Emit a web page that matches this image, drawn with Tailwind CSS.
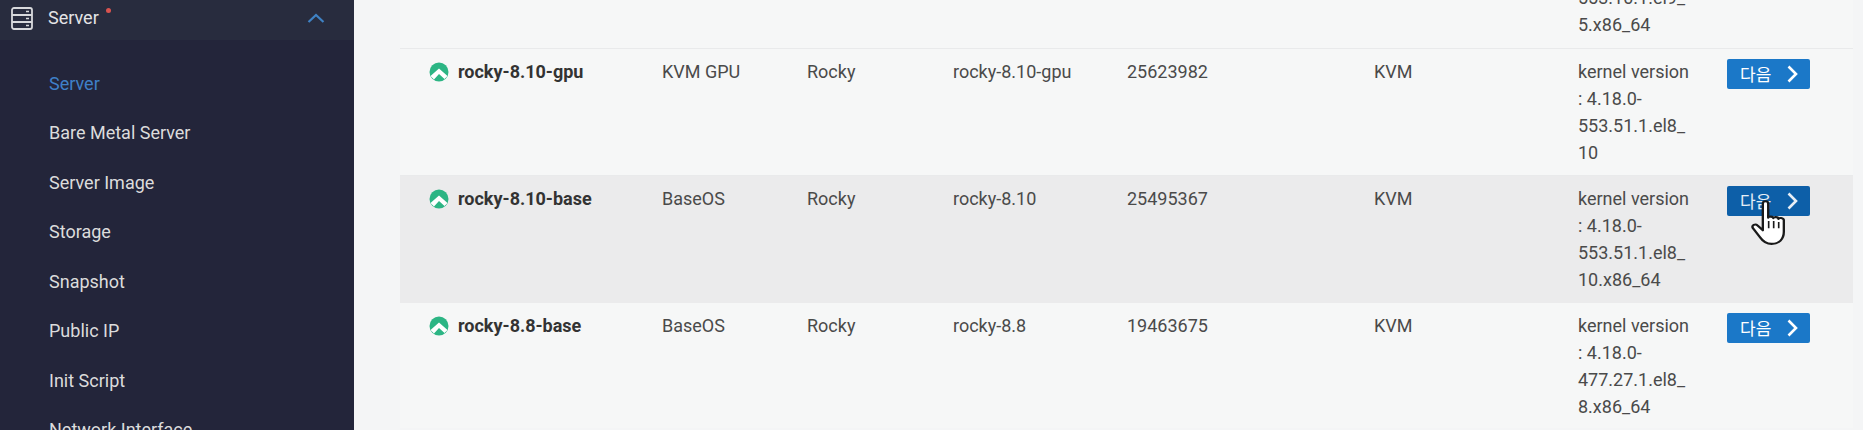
<!DOCTYPE html>
<html lang="en">
<head>
  <meta charset="UTF-8">
  <title>Server Image</title>
  <script src="https://cdn.jsdelivr.net/npm/@tailwindcss/browser@4"></script>
</head>
<body class="h-[430px] overflow-hidden bg-[#f4f5f6] font-['Roboto',sans-serif]">
<div class="flex h-[430px] overflow-hidden">

  <!-- Sidebar -->
  <aside class="w-[354px] shrink-0 h-[430px] overflow-hidden bg-[#23253a] text-[18px] text-[#dcdcdc]">
    <div class="h-[40px] bg-[#282c3e] flex items-start pt-[7px] pl-[11px] pr-[29px]">
      <svg class="w-[22px] h-[23px] shrink-0" viewBox="0 0 22 23" fill="none" stroke="#d8d9dc" stroke-width="1.8">
        <rect x="1" y="1" width="20" height="21" rx="2"/>
        <path d="M1 8h20M1 15h20"/>
        <path d="M15 4.5h3M15 11.5h3M15 18.5h3" stroke-width="1.5"/>
      </svg>
      <span class="ml-[15px] leading-[22px] text-[#e4e4e6]">Server</span>
      <span class="ml-[7px] mt-[1px] w-[5px] h-[5px] rounded-full bg-[#d9534f]"></span>
      <svg class="ml-auto mt-[6px] w-[18px] h-[10px]" viewBox="0 0 18 10" fill="none" stroke="#3f82c4" stroke-width="2.2">
        <path d="M1.5 9L9 2l7.5 7"/>
      </svg>
    </div>
    <ul class="pl-[49px] pt-[32.5px] flex flex-col gap-[27.5px] leading-[22px]">
      <li class="text-[#3f80c8]">Server</li>
      <li>Bare Metal Server</li>
      <li>Server Image</li>
      <li>Storage</li>
      <li>Snapshot</li>
      <li>Public IP</li>
      <li>Init Script</li>
      <li>Network Interface</li>
    </ul>
  </aside>

  <!-- Image table -->
  <main class="relative flex-1 min-w-0 pl-[46px] pr-[10px] text-[18px] leading-[27px] text-[#4a4a4a]">
    <div class="h-[49px] overflow-hidden bg-[#f6f7f7] border-b border-[#e9eaeb] grid grid-cols-[262px_145px_146px_174px_247px_204px_149px_1fr] items-end pb-[10px]">
      <div class="col-start-7 col-span-1">
        <div class="mt-[-27px]">553.10.1.el9_</div>
        <div>5.x86_64</div>
      </div>
    </div>

    <div class="h-[127px] bg-[#f6f7f7] border-b border-[#e9eaeb] pt-[9px] grid grid-cols-[262px_145px_146px_174px_247px_204px_149px_1fr] items-start">
      <div class="flex items-center pl-[29px] font-bold text-[#333]">
        <svg class="w-[20px] h-[20px] shrink-0 mr-[9px]" viewBox="0 0 20 20"><circle cx="10" cy="10" r="9.5" fill="#2cb584"/><path d="M1.5 14L10 6.5l8.5 7.5-3 3-5.5-5-5 5.5z" fill="#fff"/></svg>
        rocky-8.10-gpu
      </div>
      <div>KVM GPU</div>
      <div>Rocky</div>
      <div>rocky-8.10-gpu</div>
      <div>25623982</div>
      <div>KVM</div>
      <div>kernel version<br>: 4.18.0-<br>553.51.1.el8_<br>10</div>
      <div class="pt-[1px]">
        <button class="w-[83px] h-[30px] rounded-[2px] bg-[#1b78c8] text-white text-[17px] leading-[30px] flex items-center pl-[13px]">
          <span class="font-['Noto_Sans_CJK_KR',sans-serif]">다음</span>
          <svg class="ml-[16px] w-[11px] h-[18px]" viewBox="0 0 11 18" fill="none" stroke="#fff" stroke-width="2.6"><path d="M1.5 1.5L9 9l-7.5 7.5"/></svg>
        </button>
      </div>
    </div>

    <div class="h-[127px] bg-[#ebebec] pt-[9px] grid grid-cols-[262px_145px_146px_174px_247px_204px_149px_1fr] items-start">
      <div class="flex items-center pl-[29px] font-bold text-[#333]">
        <svg class="w-[20px] h-[20px] shrink-0 mr-[9px]" viewBox="0 0 20 20"><circle cx="10" cy="10" r="9.5" fill="#2cb584"/><path d="M1.5 14L10 6.5l8.5 7.5-3 3-5.5-5-5 5.5z" fill="#fff"/></svg>
        rocky-8.10-base
      </div>
      <div>BaseOS</div>
      <div>Rocky</div>
      <div>rocky-8.10</div>
      <div>25495367</div>
      <div>KVM</div>
      <div>kernel version<br>: 4.18.0-<br>553.51.1.el8_<br>10.x86_64</div>
      <div class="pt-[1px]">
        <button class="w-[83px] h-[30px] rounded-[2px] bg-[#0d5fa8] text-white/90 text-[17px] leading-[30px] flex items-center pl-[13px]">
          <span class="font-['Noto_Sans_CJK_KR',sans-serif]">다음</span>
          <svg class="ml-[16px] w-[11px] h-[18px]" viewBox="0 0 11 18" fill="none" stroke="#e8eef5" stroke-width="2.6"><path d="M1.5 1.5L9 9l-7.5 7.5"/></svg>
        </button>
      </div>
    </div>

    <div class="h-[125px] bg-[#f6f7f7] pt-[9px] grid grid-cols-[262px_145px_146px_174px_247px_204px_149px_1fr] items-start">
      <div class="flex items-center pl-[29px] font-bold text-[#333]">
        <svg class="w-[20px] h-[20px] shrink-0 mr-[9px]" viewBox="0 0 20 20"><circle cx="10" cy="10" r="9.5" fill="#2cb584"/><path d="M1.5 14L10 6.5l8.5 7.5-3 3-5.5-5-5 5.5z" fill="#fff"/></svg>
        rocky-8.8-base
      </div>
      <div>BaseOS</div>
      <div>Rocky</div>
      <div>rocky-8.8</div>
      <div>19463675</div>
      <div>KVM</div>
      <div>kernel version<br>: 4.18.0-<br>477.27.1.el8_<br>8.x86_64</div>
      <div class="pt-[1px]">
        <button class="w-[83px] h-[30px] rounded-[2px] bg-[#1b78c8] text-white text-[17px] leading-[30px] flex items-center pl-[13px]">
          <span class="font-['Noto_Sans_CJK_KR',sans-serif]">다음</span>
          <svg class="ml-[16px] w-[11px] h-[18px]" viewBox="0 0 11 18" fill="none" stroke="#fff" stroke-width="2.6"><path d="M1.5 1.5L9 9l-7.5 7.5"/></svg>
        </button>
      </div>
    </div>

    <!-- Mouse pointer over the hovered button -->
    <svg class="absolute left-[1396px] top-[200px] w-[42px] h-[47px]" viewBox="0 0 36 45" preserveAspectRatio="none">
      <path d="M11 3.5c0-3 4.6-3 4.6 0V17c0-1.5 4.4-1.5 4.4 .5 0-1.6 4.4-1.6 4.4 .7 0-1.6 4.6-1.2 4.6 1.3v11c0 7-4 11.5-10.5 11.5-5 0-7.5-2.5-10-6.5L2.5 27c-1.5-2.6 2-4.8 4-2.6l4.5 4.6z" fill="#fff" stroke="#1a1a1a" stroke-width="2" stroke-linejoin="round"/>
      <path d="M16 20v7M20.3 20v7M24.6 21v6" stroke="#1a1a1a" stroke-width="1.4" fill="none"/>
    </svg>
  </main>
</div>
</body>
</html>
